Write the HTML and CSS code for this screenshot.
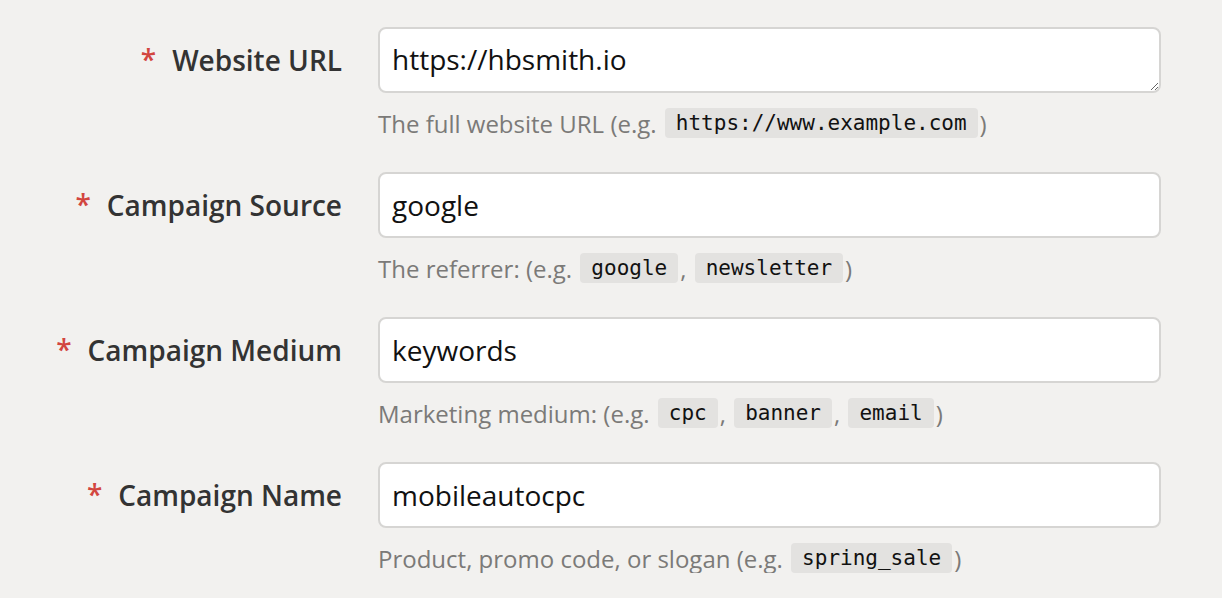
FILE: index.html
```html
<!DOCTYPE html>
<html>
<head>
<meta charset="utf-8">
<link rel="stylesheet" href="styles.css">
</head>
<body>
<form class="form">
  <div class="row">
    <label class="label"><span class="req">*</span>Website URL</label>
    <div class="field">
      <textarea class="input area" rows="1">https://hbsmith.io</textarea>
      <div class="help">The full website URL (e.g. <code>https://www.example.com</code>)</div>
    </div>
  </div>
  <div class="row">
    <label class="label"><span class="req">*</span>Campaign Source</label>
    <div class="field">
      <input class="input" type="text" value="google">
      <div class="help">The referrer: (e.g. <code>google</code>, <code>newsletter</code>)</div>
    </div>
  </div>
  <div class="row">
    <label class="label"><span class="req">*</span>Campaign Medium</label>
    <div class="field">
      <input class="input" type="text" value="keywords">
      <div class="help">Marketing medium: (e.g. <code>cpc</code>, <code>banner</code>, <code>email</code>)</div>
    </div>
  </div>
  <div class="row">
    <label class="label"><span class="req">*</span>Campaign Name</label>
    <div class="field">
      <input class="input" type="text" value="mobileautocpc">
      <div class="help">Product, promo code, or slogan (e.g. <code>spring_sale</code>)</div>
    </div>
  </div>
</form>
</body>
</html>
```

FILE: styles.css
```css
html, body {
  margin: 0;
  padding: 0;
  background: #f2f1ef;
}
body {
  font-family: "Open Sans", "Noto Sans", sans-serif;
  color: #333;
}
.form {
  padding-top: 27px;
  display: flex;
  flex-direction: column;
  gap: 34px;
}
.row {
  display: grid;
  grid-template-columns: 342px 783px;
  column-gap: 36px;
  align-items: start;
}
.label {
  height: 66px;
  display: flex;
  align-items: center;
  justify-content: flex-end;
  font-size: 28px;
  font-weight: 600;
  color: #333;
}
.req {
  color: #d2463f;
  margin-right: 16px;
  font-size: 28px;
  position: relative;
  top: -1px;
}
.field {
  display: flex;
  flex-direction: column;
}
.input {
  box-sizing: border-box;
  width: 783px;
  height: 66px;
  margin: 0;
  border: 2px solid #d6d5d3;
  border-radius: 8px;
  background: #fff;
  padding: 0 12px;
  font-family: "Open Sans", "Noto Sans", sans-serif;
  font-size: 28px;
  color: #111;
  outline: none;
}
.area {
  resize: vertical;
  padding-top: 11px;
  line-height: 38px;
  overflow: hidden;
  display: block;
}
.help {
  margin-top: 15px;
  height: 30px;
  display: flex;
  align-items: center;
  font-size: 24px;
  color: #7b7a78;
  white-space: pre;
}
code {
  font-family: "DejaVu Sans Mono", monospace;
  font-size: 21px;
  color: #111;
  background: #e3e2e0;
  border-radius: 4px;
  padding: 0 11px;
  height: 30px;
  line-height: 30px;
  margin: 0 2px 0 2px;
}
```
